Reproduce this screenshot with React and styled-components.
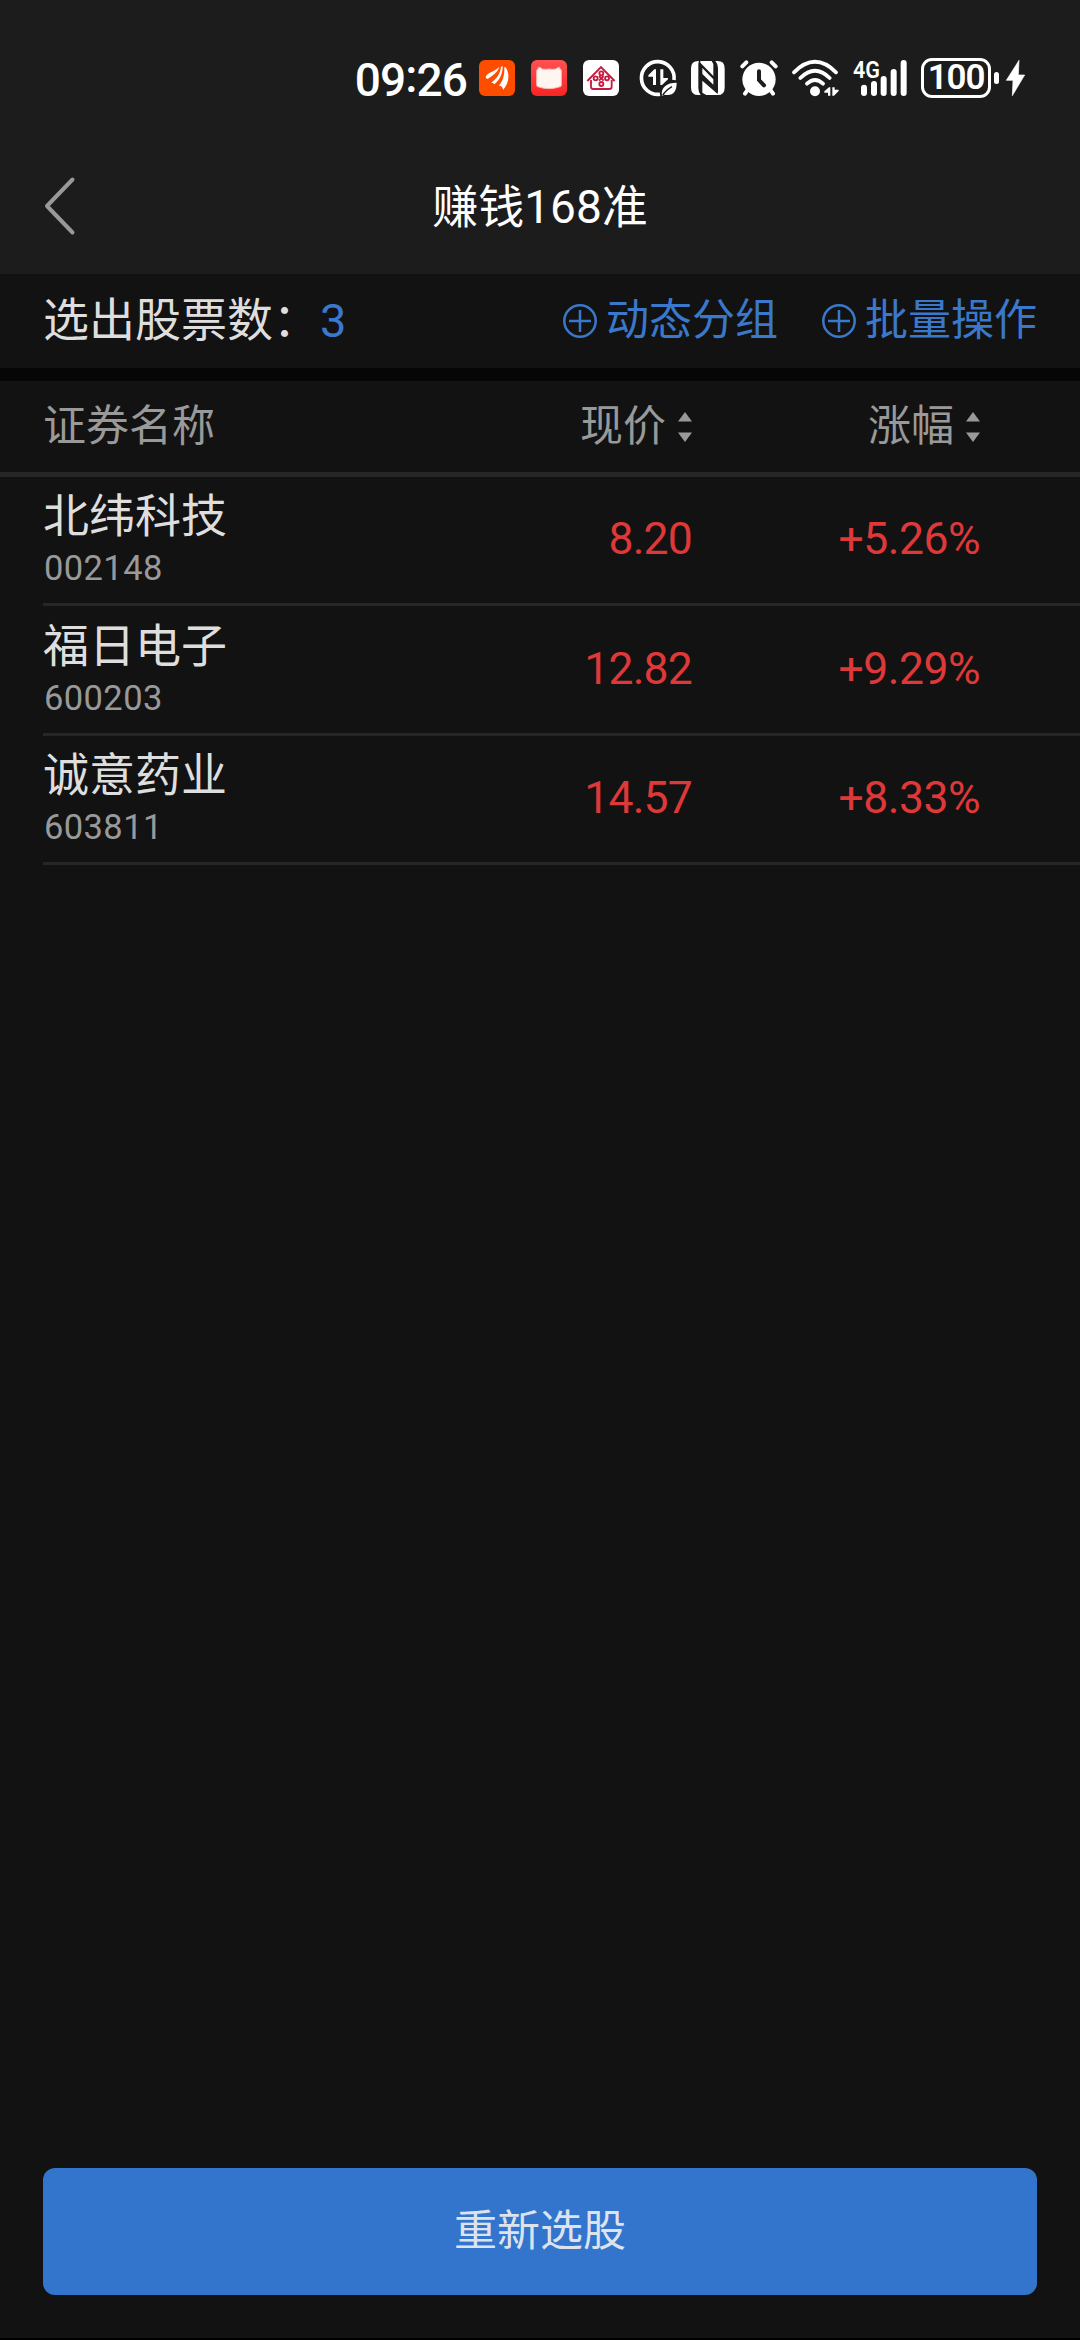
import React from "react";
import styled, { createGlobalStyle } from "styled-components";

const GlobalStyle = createGlobalStyle`
  * {
    box-sizing: border-box;
  }
  body {
    margin: 0;
    background: #121212;
    font-family: Roboto, "Noto Sans CJK SC", sans-serif;
  }
  svg {
    display: block;
    flex-shrink: 0;
    overflow: visible;
  }
`;

const Screen = styled.div`
  width: 1080px;
  height: 2340px;
  display: flex;
  flex-direction: column;
  background: #121212;
  border-bottom: 2px solid #000;
  overflow: hidden;
  white-space: nowrap;
`;

const StatusBar = styled.div`
  height: 138px;
  padding: 18px 55px 0 0;
  display: flex;
  align-items: center;
  justify-content: flex-end;
  background: #1c1c1c;
  color: #fff;
`;

const Clock = styled.div`
  font-size: 46px;
  line-height: 60px;
  font-weight: 500;
  letter-spacing: -0.9px;
  margin-right: 12px;
  span {
    vertical-align: 4px;
  }
`;

const Item = styled.div`
  margin-left: ${(p) => p.$gap}px;
`;

const Battery = styled.div`
  width: 70px;
  height: 40px;
  margin-left: 14px;
  border: 3px solid #fff;
  border-radius: 11px;
  display: flex;
  align-items: center;
  justify-content: center;
  font-size: 35px;
  line-height: 34px;
  font-weight: 600;
  letter-spacing: -1.2px;
`;

const BatteryTip = styled.div`
  width: 5px;
  height: 12px;
  margin-left: 3px;
  border-radius: 3px;
  background: #fff;
`;

const TitleBar = styled.div`
  height: 136px;
  padding: 0 44px;
  display: grid;
  grid-template-columns: 40px 1fr 40px;
  align-items: center;
  background: #1c1c1c;
`;

const Title = styled.div`
  padding-top: 2px;
  color: #fff;
  font-size: 46px;
  line-height: 64px;
  text-align: center;
`;

const Summary = styled.div`
  height: 94px;
  padding: 0 43px;
  display: flex;
  align-items: center;
  color: #dedede;
  font-size: 46px;
  line-height: 60px;
`;

const Label = styled.span`
  padding-bottom: ${(p) => p.$lift || 0}px;
`;

const Count = styled.span`
  flex: 1;
  padding-left: 1px;
  color: #3a78cb;
  font-size: 47px;
`;

const Action = styled.div`
  display: flex;
  align-items: center;
  gap: 9px;
  margin-left: 44px;
  color: #3a78cb;
  font-size: 43px;
`;

const Divider = styled.div`
  height: 13px;
  background: #060606;
`;

const columns = `
  display: grid;
  grid-template-columns: 350px 299px 288px;
  align-items: center;
  padding-right: 100px;
`;

const TableHead = styled.div`
  ${columns}
  height: 96px;
  padding-left: 43px;
  border-bottom: 5px solid #262626;
  color: #999;
  font-size: 43px;
  line-height: 60px;
`;

const SortLabel = styled.div`
  display: flex;
  align-items: center;
  justify-content: flex-end;
  gap: 12px;
`;

const Row = styled.div`
  ${columns}
  height: ${(p) => p.$height}px;
  margin-left: 43px;
  border-bottom: 3px solid #262626;
`;

const Name = styled.div`
  color: #dedede;
  font-size: 46px;
  line-height: 54px;
  padding-bottom: 3px;
`;

const Code = styled.div`
  color: #999;
  font-size: 34.5px;
  line-height: 44px;
  letter-spacing: 0.4px;
  padding: 0 0 1px 1px;
`;

const Figure = styled.div`
  color: #de3838;
  font-size: 44.5px;
  line-height: 60px;
  text-align: right;
  padding-bottom: 2px;
  letter-spacing: ${(p) => p.$spacing || 0}px;
`;

const Footer = styled.div`
  margin-top: auto;
  padding: 0 43px 43px;
`;

const Button = styled.button`
  width: 100%;
  height: 127px;
  padding: 0 0 2px;
  display: block;
  border: 0;
  border-radius: 12px;
  background: #3375cc;
  color: #dde3ec;
  font-family: inherit;
  font-size: 43px;
  line-height: 60px;
`;

// status icons are drawn on a 3x grid
function WingIcon() {
  return (
    <svg width="36" height="36" viewBox="0 0 108 108">
      <rect width="108" height="108" rx="18" fill="#ff4d00" />
      <path
        fill="#fff"
        d="M20 54C20 36 44 38 61 20C55 40 40 46 26 57ZM36 68C54 56 64 40 66 20L71 19C71 42 62 60 46 73C44 69 40 68 36 68ZM60 77C72 62 77 46 76 21L80 22C93 40 91 70 72 90C72 82 68 77 60 77Z"
      />
    </svg>
  );
}

function BookIcon() {
  return (
    <svg width="36" height="36" viewBox="0 0 108 108">
      <defs>
        <linearGradient id="book" x1="0" y1="0" x2="0" y2="1">
          <stop offset="0" stopColor="#ff5252" />
          <stop offset="1" stopColor="#f92424" />
        </linearGradient>
      </defs>
      <rect width="108" height="108" rx="18" fill="url(#book)" />
      <path
        fill="#fff5f1"
        stroke="#ffb9b4"
        strokeWidth="3"
        d="M17 32Q17 27 22 26V22Q30 22 34 27Q44 29 54 27Q66 29 74 27Q80 22 86 22V26Q91 27 91 32V76Q91 81 84 81Q68 86 54 86Q38 86 24 81Q17 81 17 76Z"
      />
    </svg>
  );
}

function HouseIcon() {
  return (
    <svg width="36" height="36" viewBox="0 0 108 108">
      <rect width="108" height="108" rx="18" fill="#fff" />
      <g fill="none" stroke="#c9193f" strokeWidth="5.500">
        <path d="M13 63L54 21L95 63M24 60V80Q24 87 31 87H79Q86 87 86 80V60" />
        <circle cx="55" cy="40" r="6" />
        <circle cx="38" cy="55" r="6" />
        <circle cx="72" cy="55" r="6" />
        <circle cx="55" cy="72" r="6" />
        <path d="M48 48L62 62M62 48L48 62" />
      </g>
    </svg>
  );
}

function DataSaverIcon() {
  return (
    <svg width="37" height="36" viewBox="0 0 111 108">
      <path
        d="M60 102.600A49 49 0 1 1 102 60"
        fill="none"
        stroke="#fff"
        strokeWidth="11"
      />
      <path
        fill="#fff"
        d="M48 28V75H39V50H25V46L43 28ZM61 28H70V54H84V58L66 75H61Z"
      />
      <path fill="#fff" d="M66 108C62 82 80 68 110 68C110 94 100 108 74 104Z" />
      <path d="M68 106Q76 92 96 80" fill="none" stroke="#1c1c1c" strokeWidth="4" />
    </svg>
  );
}

function NfcIcon() {
  return (
    <svg width="34" height="36" viewBox="0 0 102 108">
      <path
        fill="#fff"
        d="M22 3H24Q22 7 22 14V84Q22 96 29 105H22Q0 105 0 83V25Q0 3 22 3ZM28 3H62L67 12V48L28 8ZM80 105H46L34 98V62L80 102ZM34 24L67 58V74L34 42ZM73 3H80Q101 3 101 25V83Q101 105 80 105H78Q81 101 81 94V24Q81 12 73 3Z"
      />
    </svg>
  );
}

function AlarmIcon() {
  return (
    <svg width="38" height="36" viewBox="0 0 114 108">
      <circle cx="57" cy="58" r="50" fill="#fff" />
      <g fill="none" strokeWidth="12" strokeLinecap="round">
        <path
          d="M7 19L19 7M95 7L107 19M24 88L15 101M90 88L99 101"
          stroke="#fff"
        />
        <path d="M57 34V60L72 76" stroke="#1c1c1c" />
      </g>
    </svg>
  );
}

function WifiIcon() {
  return (
    <svg width="47" height="36" viewBox="0 0 141 108">
      <g fill="none" stroke="#fff" strokeWidth="11.500" strokeLinecap="round">
        <path d="M6 37Q69 -26 132 37" />
        <path d="M25 54Q69 10 113 54" />
        <path d="M45 71Q69 49 93 71" />
      </g>
      <circle cx="69" cy="94" r="15" fill="#fff" />
      <path
        fill="#fff"
        d="M115 82V107H108V98H97V94L111 82ZM121 82H128V89H140V93L126 107H121Z"
      />
    </svg>
  );
}

function SignalIcon() {
  return (
    <svg width="54" height="36" viewBox="0 0 162 108">
      <g fill="#fff">
        <rect x="24" y="74" width="18" height="34" rx="9" />
        <rect x="54" y="63" width="18" height="45" rx="9" />
        <rect x="83" y="48" width="18" height="60" rx="9" />
        <rect x="113" y="27" width="18" height="81" rx="9" />
        <rect x="143" y="0" width="18" height="108" rx="9" />
      </g>
      <text
        x="0"
        y="53"
        fill="#fff"
        stroke="#1c1c1c"
        strokeWidth="5"
        paintOrder="stroke"
        fontFamily="Roboto"
        fontWeight="600"
        fontSize="73"
        textLength="81"
        lengthAdjust="spacingAndGlyphs"
      >
        4G
      </text>
    </svg>
  );
}

function BoltIcon() {
  return (
    <svg width="19" height="36" viewBox="0 0 57 108">
      <path
        fill="#fff"
        stroke="#fff"
        strokeWidth="2"
        strokeLinejoin="round"
        d="M39 1L1 61H21L19 107L56 45H37Z"
      />
    </svg>
  );
}

function BackIcon() {
  return (
    <svg width="32" height="58" viewBox="0 0 32 58">
      <path
        d="M28.500 2.500L3 29L28.500 55.500"
        fill="none"
        stroke="#999"
        strokeWidth="4"
        strokeLinecap="round"
        strokeLinejoin="round"
      />
    </svg>
  );
}

function PlusIcon() {
  return (
    <svg width="34" height="34" viewBox="0 0 34 34">
      <g fill="none" stroke="#3a78cb" strokeWidth="2.500">
        <circle cx="17" cy="17" r="15.700" />
        <path d="M6 17H28M17 6V28" />
      </g>
    </svg>
  );
}

function SortIcon() {
  return (
    <svg width="14" height="30" viewBox="0 0 14 30">
      <path d="M7 0L14 9.500H0ZM0 20.500H14L7 30Z" fill="#999" />
    </svg>
  );
}

const stocks = [
  { name: "北纬科技", code: "002148", price: "8.20", change: "+5.26%", height: 129 },
  { name: "福日电子", code: "600203", price: "12.82", change: "+9.29%", height: 130 },
  { name: "诚意药业", code: "603811", price: "14.57", change: "+8.33%", height: 129 },
];

export default function App() {
  return (
    <Screen>
      <GlobalStyle />
      <StatusBar>
        <Clock>
          09<span>:</span>26
        </Clock>
        <WingIcon />
        <Item $gap={16}>
          <BookIcon />
        </Item>
        <Item $gap={16}>
          <HouseIcon />
        </Item>
        <Item $gap={21}>
          <DataSaverIcon />
        </Item>
        <Item $gap={14}>
          <NfcIcon />
        </Item>
        <Item $gap={15}>
          <AlarmIcon />
        </Item>
        <Item $gap={14}>
          <WifiIcon />
        </Item>
        <Item $gap={14}>
          <SignalIcon />
        </Item>
        <Battery>100</Battery>
        <BatteryTip />
        <Item $gap={7}>
          <BoltIcon />
        </Item>
      </StatusBar>

      <TitleBar>
        <BackIcon />
        <Title>赚钱168准</Title>
      </TitleBar>

      <Summary>
        <Label $lift={2}>选出股票数：</Label>
        <Count>3</Count>
        <Action>
          <PlusIcon />
          <Label $lift={2}>动态分组</Label>
        </Action>
        <Action>
          <PlusIcon />
          <Label $lift={2}>批量操作</Label>
        </Action>
      </Summary>
      <Divider />

      <TableHead>
        <Label $lift={2}>证券名称</Label>
        <SortLabel>
          <Label $lift={2}>现价</Label>
          <SortIcon />
        </SortLabel>
        <SortLabel>
          <Label $lift={2}>涨幅</Label>
          <SortIcon />
        </SortLabel>
      </TableHead>
      {stocks.map((s) => (
        <Row key={s.code} $height={s.height}>
          <div>
            <Name>{s.name}</Name>
            <Code>{s.code}</Code>
          </div>
          <Figure $spacing={-0.8}>{s.price}</Figure>
          <Figure $spacing={-0.5}>{s.change}</Figure>
        </Row>
      ))}

      <Footer>
        <Button>重新选股</Button>
      </Footer>
    </Screen>
  );
}
